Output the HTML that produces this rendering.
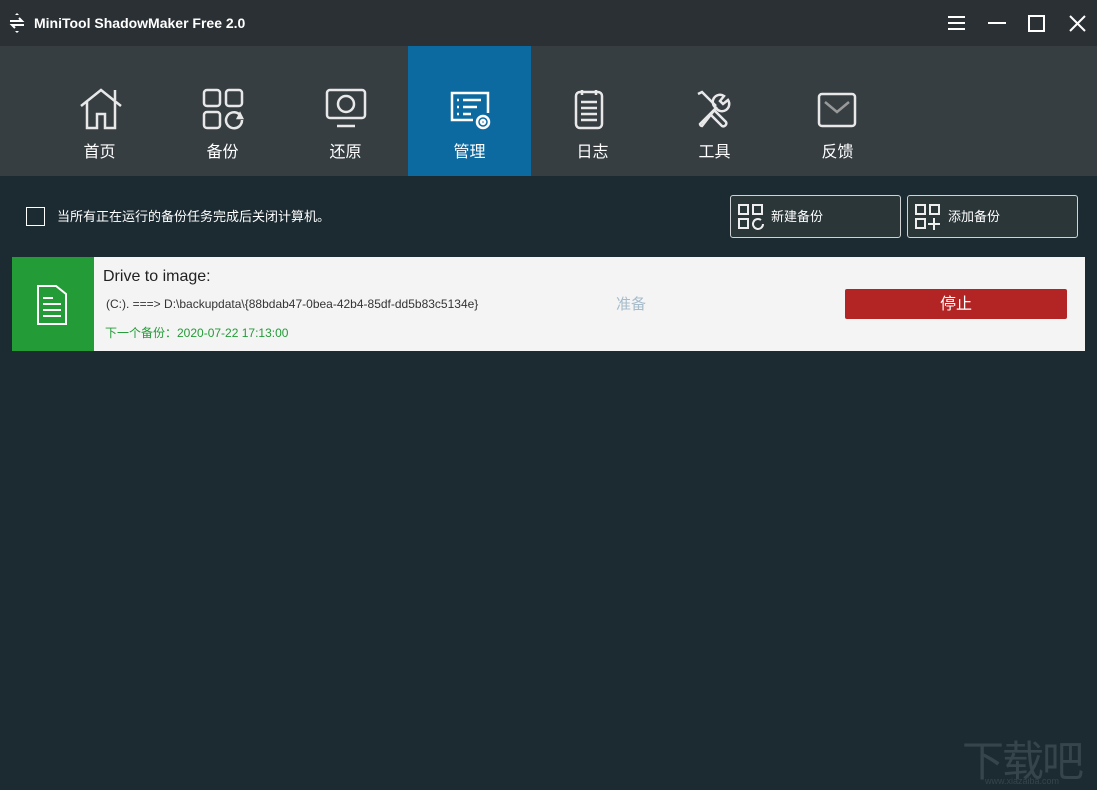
<!DOCTYPE html>
<html><head><meta charset="utf-8"><style>
*{margin:0;padding:0;box-sizing:border-box}
body{width:1097px;height:790px;background:#1c2b31;font-family:"Liberation Sans","Noto Sans CJK SC",sans-serif;position:relative;overflow:hidden;color:#fff}
.title{position:absolute;left:0;top:0;width:1097px;height:46px;background:#2b3035}
.title .t{position:absolute;left:34px;top:15px;font-size:14px;font-weight:bold;color:#fff}
.nav{position:absolute;left:0;top:46px;width:1097px;height:130px;background:#363e42}
.tab{position:absolute;top:0;width:123px;height:130px;text-align:center}
.tab svg{position:absolute;left:41px;top:42px}
.tab span{position:absolute;left:0;right:0;top:92px;font-size:16px}
.active{background:#0c6aa0}
.abs{position:absolute}
.btn{position:absolute;top:195px;height:43px;border:1px solid #cfd3d5;border-radius:3px;background:#2b3639;font-size:13px}
.btn span{position:absolute;left:40px;top:10px}
</style></head><body>
<div class="title">
<svg class="abs" style="left:7px;top:12px" width="20" height="22" viewBox="0 0 20 22" fill="none" stroke="#fff" stroke-width="2"><path d="M3 9h12l-3-3M17 13H5l3 3"/><path d="M10 1l-2 2h4zM10 21l-2-2h4z" fill="#fff" stroke="none"/></svg>
<div class="t">MiniTool ShadowMaker Free 2.0</div>
<svg class="abs" style="left:946px;top:14px" width="140" height="20" fill="none" stroke="#fff" stroke-width="2"><path d="M2 3h17M2 9h17M2 15h17"/><path d="M42 9h18"/><rect x="83" y="2" width="15" height="15"/><path d="M124 2l15 15M139 2l-15 15"/></svg>
</div>
<div class="nav">
<div class="tab" style="left:38px"><svg width="44" height="44" viewBox="0 0 44 44" fill="none" stroke="#e8e8e8" stroke-width="2.5"><path d="M2 18L22 2l20 16M8 14v26h10V26h8v14h10V14M36 2v10"/></svg><span>首页</span></div>
<div class="tab" style="left:161px"><svg width="44" height="44" viewBox="0 0 44 44" fill="none" stroke="#e8e8e8" stroke-width="2.5"><rect x="2" y="2" width="16" height="16" rx="3"/><rect x="24" y="2" width="16" height="16" rx="3"/><rect x="2" y="24" width="16" height="16" rx="3"/><path d="M40 32a8 8 0 1 1-3-6"/><path d="M38 26l2 4-4 0z" fill="#e8e8e8"/></svg><span>备份</span></div>
<div class="tab" style="left:284px"><svg width="44" height="44" viewBox="0 0 44 44" fill="none" stroke="#e8e8e8" stroke-width="2.5"><rect x="2" y="2" width="38" height="28" rx="3"/><path d="M12 38h18"/><circle cx="21" cy="16" r="8"/></svg><span>还原</span></div>
<div class="tab active" style="left:408px"><svg width="44" height="44" viewBox="0 0 44 44" fill="none" stroke="#fff" stroke-width="2.5"><path d="M24 32H3V5h36v20"/><path d="M8 12h2M14 12h18M8 19h2M14 19h14M8 26h2M14 26h8"/><circle cx="34" cy="34" r="6"/><circle cx="34" cy="34" r="2"/></svg><span>管理</span></div>
<div class="tab" style="left:531px"><svg width="44" height="44" viewBox="0 0 44 44" fill="none" stroke="#e8e8e8" stroke-width="2.5"><rect x="4" y="4" width="26" height="36" rx="4"/><path d="M10 2v5M24 2v5M9 14h16M9 20h16M9 26h16M9 32h16"/></svg><span>日志</span></div>
<div class="tab" style="left:653px"><svg width="44" height="44" viewBox="0 0 44 44" fill="none" stroke="#e8e8e8" stroke-width="2.5"><path d="M4 6l4-2 14 14M20 22l12 12a3 3 0 0 1-4 4L16 26"/><path d="M6 36l16-16a7 7 0 0 1 8-12l-4 5 3 3 5-4a7 7 0 0 1-12 8L8 38a2 2 0 0 1-2-2z"/></svg><span>工具</span></div>
<div class="tab" style="left:776px"><svg width="44" height="44" viewBox="0 0 44 44" fill="none" stroke="#e8e8e8" stroke-width="2.5"><rect x="2" y="6" width="36" height="32" rx="3"/><path d="M8 14l12 10 12-10" stroke="#999"/></svg><span>反馈</span></div>
</div>
<div class="abs" style="left:26px;top:207px;width:19px;height:19px;border:1.5px solid #fff"></div>
<div class="abs" style="left:57px;top:206px;font-size:13px">当所有正在运行的备份任务完成后关闭计算机。</div>
<div class="btn" style="left:730px;width:171px"><svg class="abs" style="left:6px;top:7px" width="28" height="28" fill="none" stroke="#eee" stroke-width="2"><rect x="2" y="2" width="9" height="9"/><rect x="16" y="2" width="9" height="9"/><rect x="2" y="16" width="9" height="9"/><path d="M26 21a5 5 0 1 1-2-4"/></svg><span>新建备份</span></div>
<div class="btn" style="left:907px;width:171px"><svg class="abs" style="left:6px;top:7px" width="28" height="28" fill="none" stroke="#eee" stroke-width="2"><rect x="2" y="2" width="9" height="9"/><rect x="16" y="2" width="9" height="9"/><rect x="2" y="16" width="9" height="9"/><path d="M20 15v12M14 21h12"/></svg><span>添加备份</span></div>
<div class="abs" style="left:12px;top:257px;width:1073px;height:94px;background:#f4f4f4"></div>
<div class="abs" style="left:12px;top:257px;width:82px;height:94px;background:#239b37"></div>
<svg class="abs" style="left:34px;top:284px" width="36" height="44" fill="none" stroke="#fff" stroke-width="2"><path d="M4 2h18l10 8v30H4z"/><path d="M9 14h10M9 20h18M9 26h18M9 32h18"/></svg>
<div class="abs" style="left:103px;top:268px;font-size:16px;color:#222">Drive to image:</div>
<div class="abs" style="left:106px;top:297px;font-size:12px;color:#333">(C:). ===&gt; D:\backupdata\{88bdab47-0bea-42b4-85df-dd5b83c5134e}</div>
<div class="abs" style="left:105px;top:324px;font-size:12px;color:#239b37">下一个备份：2020-07-22 17:13:00</div>
<div class="abs" style="left:616px;top:293px;font-size:15px;color:#a6bccb">准备</div>
<div class="abs" style="left:845px;top:289px;width:222px;height:30px;background:#b32525;border-radius:2px;font-size:16px;text-align:center;line-height:31px">停止</div>
<div class="abs" style="left:962px;top:728px;font-size:42px;color:#35454b;letter-spacing:-2px">下载吧</div>
<div class="abs" style="left:985px;top:776px;font-size:9px;color:#35454b">www.xiazaiba.com</div>
</body></html>
